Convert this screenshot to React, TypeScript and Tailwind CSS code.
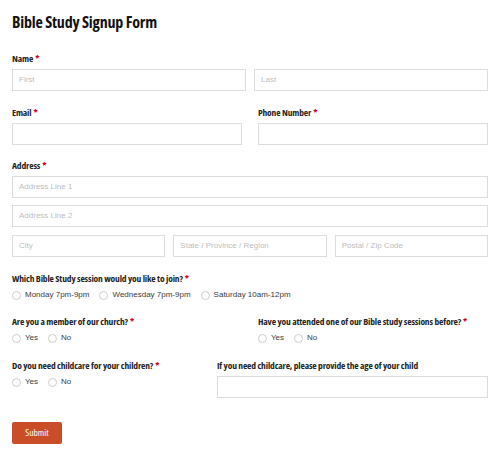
import React from "react";

const cond = "font-['Open_Sans',sans-serif] [font-stretch:75%] font-bold";

function Label({ children, req = true }: { children: React.ReactNode; req?: boolean }) {
  return (
    <div className={`${cond} text-[9.5px] tracking-[-0.15px] leading-[14px] text-[#222] h-[14px] whitespace-nowrap`}>
      {children}
      {req && <span className="text-[#d0021b] ml-[2px]">*</span>}
    </div>
  );
}

function Input({ ph = "", className = "" }: { ph?: string; className?: string }) {
  return (
    <div
      className={`h-[22px] border border-[#dcdcdc] bg-white flex items-center px-[6px] text-[8px] text-[#bdbdbd] font-['Liberation_Sans',Arial,sans-serif] ${className}`}
    >
      {ph}
    </div>
  );
}

function Radio({ label }: { label: string }) {
  return (
    <div className="flex items-center gap-[4px]">
      <span className="w-[9px] h-[9px] rounded-full border border-[#cccccc] bg-white inline-block" />
      <span className="text-[8px] text-[#3a3a3a] font-['Liberation_Sans',Arial,sans-serif]">{label}</span>
    </div>
  );
}

function Radios({ items }: { items: string[] }) {
  return (
    <div className="flex items-center gap-[10px] h-[14px] mt-[2px]">
      {items.map((i) => (
        <Radio key={i} label={i} />
      ))}
    </div>
  );
}

export default function App() {
  return (
    <div className="w-[500px] h-[456px] bg-white px-3 font-['Liberation_Sans',Arial,sans-serif]">
      <h1 className={`${cond} text-[16px] tracking-[-0.2px] leading-[20px] pt-[12px] text-[#111]`}>Bible Study Signup Form</h1>

      <div className="mt-[20px]">
        <Label>Name</Label>
        <div className="grid grid-cols-2 gap-2 mt-[3px]">
          <Input ph="First" />
          <Input ph="Last" />
        </div>
      </div>

      <div className="grid grid-cols-2 gap-4 mt-[15px]">
        <div>
          <Label>Email</Label>
          <Input className="mt-[3px]" />
        </div>
        <div>
          <Label>Phone Number</Label>
          <Input className="mt-[3px]" />
        </div>
      </div>

      <div className="mt-[14px]">
        <Label>Address</Label>
        <Input ph="Address Line 1" className="mt-[3px]" />
        <Input ph="Address Line 2" className="mt-[7px]" />
        <div className="grid grid-cols-3 gap-2 mt-[8px]">
          <Input ph="City" />
          <Input ph="State / Province / Region" />
          <Input ph="Postal / Zip Code" />
        </div>
      </div>

      <div className="mt-[15px]">
        <Label>Which Bible Study session would you like to join?</Label>
        <Radios items={["Monday 7pm-9pm", "Wednesday 7pm-9pm", "Saturday 10am-12pm"]} />
      </div>

      <div className="grid grid-cols-2 gap-4 mt-[13px]">
        <div>
          <Label>Are you a member of our church?</Label>
          <Radios items={["Yes", "No"]} />
        </div>
        <div>
          <Label>Have you attended one of our Bible study sessions before?</Label>
          <Radios items={["Yes", "No"]} />
        </div>
      </div>

      <div className="grid grid-cols-[189px_1fr] gap-4 mt-[14px]">
        <div>
          <Label>Do you need childcare for your children?</Label>
          <Radios items={["Yes", "No"]} />
        </div>
        <div>
          <Label req={false}>If you need childcare, please provide the age of your child</Label>
          <Input className="mt-[3px]" />
        </div>
      </div>

      <button
        className={`${cond} font-normal mt-[24px] w-[50px] h-[22px] rounded-[2px] bg-[#c94d27] text-white text-[9.5px] flex items-center justify-center`}
      >
        Submit
      </button>
    </div>
  );
}
